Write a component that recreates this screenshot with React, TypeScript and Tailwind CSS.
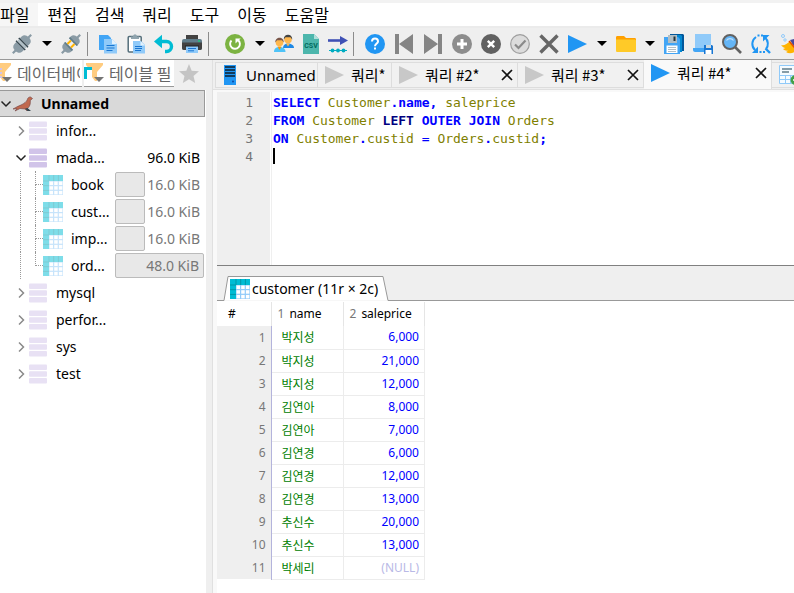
import type { ReactNode } from 'react';

const uiFont = "font-['Noto_Sans','Noto_Sans_CJK_KR',sans-serif]";
const koFont = "font-['Noto_Sans_CJK_KR',sans-serif]";

function Icon({ children, className = 'size-5' }: { children: ReactNode; className?: string }) {
  return (
    <svg viewBox="0 0 20 20" className={`${className} block shrink-0`} aria-hidden="true">
      {children}
    </svg>
  );
}

const Plug = ({ split = false }: { split?: boolean }) => (
  <Icon>
    <g transform="rotate(45 10 10)">
      <path d="M8.900 -3h2.200v6H8.900z M8.900 17h2.200v6H8.900z" fill="#8a9ba5" />
      <path d="M4.500 7.500V5c0-3 2-4.500 5.500-4.500S15.500 2 15.500 5v2.500z" fill="#8a9ba5" />
      <path d="M4.500 12.500V15c0 3 2 4.500 5.500 4.500s5.500-1.500 5.500-4.500v-2.500z" fill="#8a9ba5" />
      {split ? (
        <>
          <path d="M4.500 6.500h11M4.500 13.500h11" stroke="#607d8b" strokeWidth="1.500" />
          <path d="M6.500 7.500h2v5h-2z M11.500 7.500h2v5h-2z" fill="#ffb300" />
        </>
      ) : (
        <>
          <path d="M3.500 7.300h13v1.500h-13z M3.500 11.200h13v1.500h-13z" fill="#37474f" />
          <path d="M4.500 8.800h11v2.400h-11z" fill="#b0bec5" />
        </>
      )}
    </g>
  </Icon>
);

const Copy = () => (
  <Icon>
    <path d="M1 1h9l3 3v12H1z" fill="#42a5f5" />
    <path d="M6 5h8l5 5v9.500H6z" fill="#90caf9" />
    <path d="M14 5v5h5z" fill="#e3f2fd" />
    <path d="M8.500 11.500h8M8.500 14h8M8.500 16.500h6" stroke="#1976d2" />
  </Icon>
);

const Paste = () => (
  <Icon>
    <rect x="2.200" y="2.500" width="13" height="15.500" rx="1" fill="#fff" stroke="#546e7a" strokeWidth="1.500" />
    <path d="M5 5V2.500h2c.5-3 3.500-3 4 0h2V5z" fill="#90a4ae" />
    <path d="M7 7h8l4 4v8.500H7z" fill="#90caf9" />
    <path d="M14.500 7v4.500H19z" fill="#e3f2fd" />
    <path d="M9 12.500h7M9 14.500h7M9 16.500h6" stroke="#1976d2" />
  </Icon>
);

const Undo = () => (
  <Icon>
    <path d="M6 7.500h6.500a5 5 0 0 1 0 10H11" fill="none" stroke="#00bcd4" strokeWidth="3.400" />
    <path d="M0 7.500 8 .8v13.400z" fill="#00bcd4" />
  </Icon>
);

const Print = () => (
  <Icon>
    <path d="M4 1h12v6H4z" fill="#424242" />
    <rect x="0" y="5" width="20" height="11" rx="2" fill="#607d8b" />
    <path d="M0 8.500h20V14a2 2 0 0 1-2 2H2a2 2 0 0 1-2-2z" fill="#424242" />
    <path d="M4 12h12v7H4z" fill="#90caf9" />
    <path d="M3 12h14" stroke="#212121" />
    <path d="M6 14.500h8M6 16.800h6" stroke="#1976d2" />
    <rect x="16" y="6.500" width="2" height="1" fill="#00e676" />
  </Icon>
);

const Refresh = () => (
  <Icon>
    <circle cx="10" cy="10" r="10" fill="#7cb342" />
    <path d="M6.500 6.500a4.900 4.900 0 1 0 6.700-.3" fill="none" stroke="#fff" strokeWidth="1.900" />
    <path d="M10.500 4.500h5.200l-5.200 5z" fill="#fff" />
  </Icon>
);

const Users = () => (
  <Icon>
    <path d="M9 14c0-3 2-4.500 5-4.500s6 1.500 6 4.500z" fill="#1e88e5" />
    <path d="M12 9.500h4l-2 3z" fill="#ffb74d" />
    <circle cx="14" cy="5.500" r="3.800" fill="#ffb74d" />
    <path d="M9.800 5.500c-.5-6.500 9-6.500 8.400 0l-1.700-2.200h-5z" fill="#424242" />
    <path d="M0 18c0-3.500 2-5 5.500-5s6 1.500 6 5z" fill="#4fc3f7" />
    <path d="M3.500 12.500h4l-2 3.500z" fill="#ff9800" />
    <circle cx="5.500" cy="8.500" r="3.800" fill="#ffb74d" />
    <path d="M1.300 8.500C.8 2 10.300 2 9.700 8.500L8 6.300H3z" fill="#795548" />
  </Icon>
);

const Csv = () => (
  <Icon>
    <path d="M2 0h11l5 5v15H2z" fill="#4db6ac" />
    <path d="M13 0v5h5z" fill="#b2dfdb" />
    <text x="10" y="14" textAnchor="middle" fontSize="7" fontWeight="700" fill="#00695c" fontFamily="Roboto, sans-serif">
      CSV
    </text>
  </Icon>
);

const Transfer = () => (
  <Icon>
    <path d="M0 6.500h13" stroke="#3f51b5" strokeWidth="2.600" />
    <path d="M12 2l8 4.500L12 11z" fill="#3f51b5" />
    <path d="M1 16.500h18" stroke="#00acc1" />
    <circle cx="4.500" cy="16.500" r="1.900" fill="#00acc1" />
    <circle cx="10" cy="16.500" r="1.900" fill="#00acc1" />
    <circle cx="15.500" cy="16.500" r="1.900" fill="#00acc1" />
  </Icon>
);

const Help = () => (
  <Icon>
    <circle cx="10" cy="10" r="10" fill="#2196f3" />
    <path d="M7 7.500c0-4 6-4 6 0 0 2-3 2-3 4.800" fill="none" stroke="#fff" strokeWidth="2" />
    <rect x="9" y="13.500" width="2" height="2" fill="#fff" />
  </Icon>
);

const First = () => (
  <Icon>
    <path d="M1 0h4v20H1z M19 0v20L5 10z" fill="#858585" />
  </Icon>
);

const Last = () => (
  <Icon>
    <path d="M15 0h4v20h-4z M1 0v20l14-10z" fill="#858585" />
  </Icon>
);

const Add = () => (
  <Icon>
    <circle cx="10" cy="10" r="10" fill="#8d8d8d" />
    <path d="M10 5v10M5 10h10" stroke="#fff" strokeWidth="3" />
  </Icon>
);

const Remove = () => (
  <Icon>
    <circle cx="10" cy="10" r="10" fill="#616161" />
    <path d="m6.800 6.800 6.400 6.400m0-6.400-6.400 6.400" stroke="#fff" strokeWidth="2.400" />
  </Icon>
);

const Check = () => (
  <Icon>
    <circle cx="10" cy="10" r="9.300" fill="#dcdcdc" stroke="#9e9e9e" strokeWidth="1.200" />
    <path d="m5 10.500 3.500 3.500L15.500 6.500" fill="none" stroke="#8a8a8a" strokeWidth="2.200" />
  </Icon>
);

const Cancel = () => (
  <Icon>
    <path d="m1.500 1.500 17 17m0-17-17 17" stroke="#666" strokeWidth="3.400" />
  </Icon>
);

const Play = ({ color = '#2196f3' }: { color?: string }) => (
  <Icon>
    <path d="M0 1v18l19-9z" fill={color} />
  </Icon>
);

const Folder = () => (
  <Icon>
    <path d="M0 3.500C0 2.500.5 2 1.500 2H8l2 2h8.500c1 0 1.500.5 1.500 1.500V10H0z" fill="#ffa000" />
    <path d="M0 5.500h18.500c1 0 1.500.5 1.500 1.500v9.500c0 1-.5 1.500-1.500 1.500h-17C.5 18 0 17.500 0 16.500z" fill="#ffca28" />
  </Icon>
);

const Save = () => (
  <Icon>
    <path d="M6 0h13l1 1v16H6z" fill="#01579b" />
    <path d="M4 1h13l1 1v16H4z" fill="#0288d1" />
    <path d="M0 3h14l2 2v15H0z" fill="#42a5f5" />
    <path d="M4 1h9v8H4z" fill="#b0bec5" />
    <path d="M9.500 2.500h2v4.500h-2z" fill="#263238" />
    <path d="M2.500 11.500h11V19h-11z" fill="#fff" />
    <path d="M4 13.500h8M4 15.500h8M4 17.500h8" stroke="#b0bec5" />
  </Icon>
);

const SaveScript = () => (
  <Icon>
    <path d="M2 0h16v15H2z" fill="#90caf9" />
    <path d="M0 14h14v4H2c-1 0-2-1-2-2z" fill="#42a5f5" />
    <path d="M11 11h8l1 1v8h-9z" fill="#1976d2" />
    <path d="M13 11h5v3h-5z" fill="#cfd8dc" />
    <path d="M12.500 16h6v4h-6z" fill="#fff" />
  </Icon>
);

const Search = () => (
  <Icon>
    <path d="m13 13 6 6" stroke="#616161" strokeWidth="2.600" />
    <circle cx="8" cy="8" r="7" fill="#64b5f6" stroke="#616161" strokeWidth="2" />
    <path d="M4.500 6.500c1.500-2.500 5.500-2.500 7 0" fill="none" stroke="#bbdefb" strokeWidth="1.200" />
  </Icon>
);

const Replace = () => (
  <Icon>
    <path d="M5 3a8.300 8.300 0 0 0-1 13" fill="none" stroke="#2196f3" strokeWidth="2" />
    <path d="M7 12.500V19H1z" fill="#2196f3" />
    <path d="M14 3.500a8.300 8.300 0 0 1 1 11.500" fill="none" stroke="#2196f3" strokeWidth="2" />
    <path d="M12 1h6.500L12 7.500z" fill="#2196f3" />
    <path d="m14.500 14.500 4.500 4.500" stroke="#2196f3" strokeWidth="2.400" />
    <path d="M6.500 1.500H12M8.500 18H14" stroke="#2196f3" strokeWidth="2" strokeDasharray="2 1.500" />
  </Icon>
);

const Broom = () => (
  <Icon>
    <circle cx="3" cy="2" r="1.500" fill="none" stroke="#90caf9" />
    <circle cx="5" cy="6" r="1.200" fill="none" stroke="#90caf9" />
    <path d="M10 6l4-1 6 8-4 4z" fill="#4a4a9e" />
    <path d="M1 11c3 1 6-1 9-4l7 9c-4 4-8 4-11 2l2.500-1.500c-2 .5-4 0-5.500-1.500l2.500-1C3.500 14 2 12.500 1 11z" fill="#ffb300" />
    <path d="m9 7 7.500 9" stroke="#e65100" strokeWidth="1.500" />
  </Icon>
);

const TableIcon = ({ faded = false }: { faded?: boolean }) => (
  <svg viewBox="0 0 20 20" className={`block size-5 shrink-0 ${faded ? 'opacity-50' : ''}`} aria-hidden="true">
    <path d="M0 0h20v20H0z" fill="#00bcd4" />
    <path d="M6 6h14v14H6z" fill="#90caf9" />
    {[6, 10.7, 15.4].map((y) =>
      [6, 10.7, 15.4].map((x) => <rect key={`${x}-${y}`} x={x + 0.5} y={y + 0.5} width="3.500" height="3.500" fill="#fff" />),
    )}
    <path d="M6 0v6M10.700 0v6M15.400 0v6M0 6h6M0 10.700h6M0 15.400h6" stroke="#0097a7" />
  </svg>
);

const Database = ({ open = false }: { open?: boolean }) => (
  <svg viewBox="0 0 18 20" className="block h-5 w-[18px] shrink-0" aria-hidden="true">
    <g fill={open ? '#d1c4e9' : '#e8e1f4'}>
      <rect y="0.500" width="18" height="5.500" rx="1" />
      <rect y="7.200" width="18" height="5.500" rx="1" />
      <rect y="14" width="18" height="5.500" rx="1" />
    </g>
  </svg>
);

const SeaLion = () => (
  <svg viewBox="0 0 20 16" className="block h-4 w-5 shrink-0" aria-hidden="true">
    <path d="M19.500 2.500 17.500 1c-1.500-.2-2.700.8-3 2.200C13.500 6 11 7.500 8 9c-3 1-5 2.500-8 4l4-.3L2 15l5-2.500 5 .5 1.500 1.500h3L14.500 12.500c2.800-2.500 3-5 2.800-8z" fill="#c1694f" stroke="#6d4040" strokeWidth=".6" />
    <path d="M12 12.500l2.500 2.500h3.500l-3.500-3z" fill="#37474f" />
  </svg>
);

const Funnel = ({ table = false }: { table?: boolean }) => (
  <svg viewBox="0 0 20 20" className="block size-5 shrink-0" aria-hidden="true">
    <path d="M2 0h17v2l-6 7v9h-2l-3-4V9L2 2z" fill="#ffcc80" />
    {table ? (
      <>
        <path d="M0 4h8v3H3v9H0z" fill="#00bcd4" />
        <path d="M3 7h5v4H5v4H3z" fill="#fff" />
      </>
    ) : (
      <path d="M3 5h7v2H3z M3 9h7v2H3z M3 13h7v2H3z" fill="#d1c4e9" />
    )}
    <path d="M10 14h10l-5 5z" fill="#757575" />
  </svg>
);

const Server = () => (
  <svg viewBox="0 0 12 20" className="mx-1 block h-5 w-3 shrink-0" aria-hidden="true">
    <path d="M0 0h12v20H0z" fill="#2196f3" />
    <path d="M1 2h10M1 5h10M1 8h10M1 11h10" stroke="#123c5e" strokeWidth="1.800" />
    <circle cx="9" cy="16.500" r="1" fill="#0d47a1" />
  </svg>
);

const NewTab = () => (
  <Icon>
    <path d="M.5.5h19v18H.5z" fill="#f5fbff" stroke="#90caf9" />
    <path d="M3 4h10M3 7h7" stroke="#607d8b" strokeWidth="1.300" />
    <path d="M1 10.500h18M1 14.500h18M6.500 10v8M11.500 10v8" stroke="#90caf9" />
    <circle cx="16.500" cy="15" r="5" fill="#43a047" />
    <path d="M16.500 12.500v5M14 15h5" stroke="#fff" strokeWidth="1.500" />
  </Icon>
);

const Close = () => (
  <svg viewBox="0 0 12 12" className="block size-3" aria-hidden="true">
    <path d="m1 1 10 10m0-10L1 11" stroke="#111" strokeWidth="1.700" />
  </svg>
);

function Tool({ label, width = 'w-7', children }: { label: string; width?: string; children: ReactNode }) {
  return (
    <button type="button" aria-label={label} className={`flex h-7 shrink-0 items-center justify-center ${width}`}>
      {children}
    </button>
  );
}

function Caret({ label, width = 'w-[21px]' }: { label: string; width?: string }) {
  return (
    <Tool label={label} width={width}>
      <svg viewBox="0 0 10 5" className="block h-[5px] w-[10px]" aria-hidden="true">
        <path d="M0 0h10L5 5z" fill="#000" />
      </svg>
    </Tool>
  );
}

const Separator = () => <span className="mr-1.5 ml-0.5 h-6 w-px shrink-0 bg-[#8c8c8c]" />;

function Toolbar() {
  const wide = 'w-[29px]';
  const medium = 'w-[27px]';
  return (
    <div role="toolbar" aria-label="도구 모음" className="flex h-8 items-center overflow-hidden border-b border-[#999] bg-[#efefef] pl-2">
      <Tool label="연결"><Plug /></Tool>
      <Caret label="연결 목록" />
      <Tool label="연결 끊기"><Plug split /></Tool>
      <Separator />
      <Tool label="복사"><Copy /></Tool>
      <Tool label="붙여넣기"><Paste /></Tool>
      <Tool label="실행 취소"><Undo /></Tool>
      <Tool label="인쇄"><Print /></Tool>
      <Separator />
      <div className="ml-1.5 flex shrink-0">
        <Tool label="새로 고침"><Refresh /></Tool>
        <Caret label="새로 고침 옵션" />
        <Tool label="사용자 관리" width={medium}><Users /></Tool>
        <Tool label="CSV 가져오기" width={medium}><Csv /></Tool>
        <Tool label="내보내기" width={medium}><Transfer /></Tool>
      </div>
      <Separator />
      <Tool label="도움말" width={wide}><Help /></Tool>
      <Tool label="처음" width={wide}><First /></Tool>
      <Tool label="마지막" width={wide}><Last /></Tool>
      <Tool label="행 추가" width={wide}><Add /></Tool>
      <Tool label="행 삭제" width={wide}><Remove /></Tool>
      <Tool label="적용" width={wide}><Check /></Tool>
      <Tool label="취소" width={wide}><Cancel /></Tool>
      <Tool label="실행" width={wide}><Play /></Tool>
      <Caret label="실행 옵션" width="w-[19px]" />
      <Tool label="열기" width={wide}><Folder /></Tool>
      <Caret label="최근 파일" width="w-[19px]" />
      <Tool label="저장" width={wide}><Save /></Tool>
      <Tool label="스니펫 저장" width={wide}><SaveScript /></Tool>
      <Tool label="찾기" width={wide}><Search /></Tool>
      <Tool label="바꾸기" width={wide}><Replace /></Tool>
      <Tool label="정리" width={wide}><Broom /></Tool>
    </div>
  );
}

function Chevron({ open = false }: { open?: boolean }) {
  return (
    <svg viewBox="0 0 12 12" className="block size-3 shrink-0" aria-hidden="true">
      {open ? (
        <path d="m1.500 3.500 4.500 4.500 4.500-4.500" fill="none" stroke="#222" strokeWidth="1.500" />
      ) : (
        <path d="m4 1.500 4.500 4.500L4 10.500" fill="none" stroke="#8a8a8a" strokeWidth="1.500" />
      )}
    </svg>
  );
}

function DatabaseRow({ name, size, open = false }: { name: string; size?: string; open?: boolean }) {
  return (
    <div className="flex h-[27px] items-center pr-1.5 pl-[15px]">
      <Chevron open={open} />
      <span className="mr-[9px] ml-0.5"><Database open={open} /></span>
      <span className="grow">{name}</span>
      {size && <span>{size}</span>}
    </div>
  );
}

function TableRow({ name, size, full = false, last = false }: { name: string; size: string; full?: boolean; last?: boolean }) {
  return (
    <li className="flex h-[27px] items-center pr-0.5 pl-5">
      <span className="h-full w-[15px] border-l border-dotted border-[#999]" />
      <span className={`flex w-2 flex-col ${last ? 'self-start' : 'h-full'}`}>
        <span className="h-[14px] w-full border-b border-l border-dotted border-[#999]" />
        {!last && <span className="grow border-l border-dotted border-[#999]" />}
      </span>
      <TableIcon faded />
      <span className="ml-2 grow">{name}</span>
      <span
        className={`flex h-[25px] w-[89px] items-center justify-end rounded-[2px] pr-1 text-[#777] ${
          full ? 'border border-[#bbb] bg-[#e8e8e8]' : ''
        }`}
      >
        {!full && <span className="h-full grow rounded-[2px] border border-[#bbb] bg-[#e8e8e8]" />}
        <span className="pl-0.5">{size}</span>
      </span>
    </li>
  );
}

function Sidebar() {
  return (
    <aside className="flex w-[206px] shrink-0 flex-col bg-white">
      <div className={`flex h-[30px] bg-[#efefef] text-base ${koFont}`}>
        <label className="mr-0.5 flex h-[27px] w-[82px] shrink-0 items-center overflow-hidden border-b border-[#999] bg-white pr-0.5">
          <span className="-ml-2"><Funnel /></span>
          <input aria-label="데이터베이스 필터" placeholder="데이터베이스 필터" className="ml-[5px] w-full min-w-0 outline-none placeholder:text-[#666]" />
        </label>
        <label className="flex h-[27px] w-[90px] shrink-0 items-center overflow-hidden border-b border-[#999] bg-white pr-0.5">
          <Funnel table />
          <input aria-label="테이블 필터" placeholder="테이블 필터" className="ml-[5px] w-full min-w-0 outline-none placeholder:text-[#666]" />
        </label>
        <button type="button" aria-label="즐겨찾기" className="flex h-7 w-[30px] items-center justify-center">
          <Icon><path d="m10 0 2.700 6.700 7.300.6-5.500 4.800L16.200 19 10 15.300 3.800 19l1.700-6.900L0 7.300l7.300-.6z" fill="#c4c4c4" /></Icon>
        </button>
      </div>
      <nav aria-label="데이터베이스 개체" className="text-sm">
        <div className="mr-px flex h-[27px] items-center border border-l-0 border-[#999] bg-[#d9d9d9] font-bold">
          <Chevron open />
          <span className="mr-2 ml-px"><SeaLion /></span>
          Unnamed
        </div>
        <DatabaseRow name="infor..." />
        <DatabaseRow name="mada..." size="96.0 KiB" open />
        <ul>
          <TableRow name="book" size="16.0 KiB" />
          <TableRow name="cust..." size="16.0 KiB" />
          <TableRow name="imp..." size="16.0 KiB" />
          <TableRow name="ord..." size="48.0 KiB" full last />
        </ul>
        <DatabaseRow name="mysql" />
        <DatabaseRow name="perfor..." />
        <DatabaseRow name="sys" />
        <DatabaseRow name="test" />
      </nav>
    </aside>
  );
}

function QueryTab({ label, width, active = false, closable = true }: { label: string; width: string; active?: boolean; closable?: boolean }) {
  return (
    <div
      className={`flex shrink-0 items-center border-r border-[#ddd] pr-1 pl-[7px] ${width} ${
        active ? 'h-[29px] self-start bg-[#f9f9f9] pb-1' : 'h-[26px] border-y bg-[#f1f1f1]'
      }`}
    >
      <button type="button" role="tab" aria-selected={active} className={`flex items-center gap-1.5 whitespace-pre ${koFont}`}>
        <Play color={active ? '#2196f3' : '#c8c8c8'} />
        {label}
      </button>
      {closable && (
        <button type="button" aria-label={`${label} 닫기`} className="ml-auto">
          <Close />
        </button>
      )}
    </div>
  );
}

function Tabs() {
  return (
    <div role="tablist" className="flex h-[29px] items-center overflow-hidden bg-[#efefef] pl-0.5 text-[15px] leading-5">
      <button type="button" role="tab" aria-selected="false" className="flex h-[26px] w-[103px] shrink-0 items-center gap-1.5 border border-[#ddd] bg-[#f1f1f1] pl-1">
        <Server />
        Unnamed
      </button>
      <QueryTab label="쿼리*" width="w-[74px]" closable={false} />
      <QueryTab label="쿼리 #2*" width="w-[126px]" />
      <QueryTab label="쿼리 #3*" width="w-[126px]" />
      <QueryTab label="쿼리 #4*" width="w-[128px]" active />
      <button type="button" aria-label="새 쿼리 탭" className="flex h-[26px] w-8 shrink-0 items-center border-y border-[#ddd] bg-[#f1f1f1] pl-[7px]">
        <NewTab />
      </button>
    </div>
  );
}

const Key = ({ children }: { children: ReactNode }) => <b className="text-[#0000ff]">{children}</b>;

function Editor() {
  return (
    <div className="flex h-[174px] border-b border-[#808080] bg-white font-['DejaVu_Sans_Mono','Liberation_Mono',monospace] text-[13px] leading-[18px]">
      <ol className="w-[54px] border-r border-white bg-[#efefef] pt-0.5 pr-[17px] text-right text-[#777]">
        <li>1</li>
        <li>2</li>
        <li>3</li>
        <li>4</li>
      </ol>
      <pre
        role="textbox"
        aria-multiline="true"
        aria-label="SQL 편집기"
        className="grow border-l border-[#efefef] pt-0.5 pl-px font-[inherit] text-[#808000]"
      >
        <div><Key>SELECT</Key> Customer<Key>.name,</Key> saleprice</div>
        <div><Key>FROM</Key> Customer <b className="text-[#000080]">LEFT</b> <Key>OUTER</Key> <Key>JOIN</Key> Orders</div>
        <div><Key>ON</Key> Customer<Key>.</Key>custid <span className="text-[#0000ff]">=</span> Orders<Key>.</Key>custid<Key>;</Key></div>
        <div className="h-4 w-0.5 bg-black" />
      </pre>
    </div>
  );
}

const rows: [string, string | null][] = [
  ['박지성', '6,000'],
  ['박지성', '21,000'],
  ['박지성', '12,000'],
  ['김연아', '8,000'],
  ['김연아', '7,000'],
  ['김연경', '6,000'],
  ['김연경', '12,000'],
  ['김연경', '13,000'],
  ['추신수', '20,000'],
  ['추신수', '13,000'],
  ['박세리', null],
];

function Results() {
  return (
    <section className="flex grow flex-col bg-white">
      <div className="flex h-[35px] items-end bg-[#efefef]">
        <span className="h-px w-1.5 bg-[#999]" />
        <button type="button" role="tab" aria-selected="true" className="relative isolate flex h-[25px] w-[166px] items-center gap-0.5 pl-[7px] text-sm whitespace-nowrap">
          <svg viewBox="0 0 166 25" preserveAspectRatio="none" className="absolute inset-0 -z-10 size-full" aria-hidden="true">
            <path d="M0 24.500h1L5 .5h155l5 24h1" fill="#fff" stroke="#999" />
          </svg>
          <TableIcon />
          customer (11r × 2c)
        </button>
        <span className="h-px grow bg-[#999]" />
      </div>
      <table className="mt-px w-[208px] table-fixed border-collapse text-xs leading-4">
        <thead>
          <tr className="h-6 text-left">
            <th scope="col" className="w-[54px] border-r border-[#e5e5e5] pl-[11px] font-normal">#</th>
            <th scope="col" className="w-[72px] border-r border-[#e5e5e5] pl-1.5 font-normal"><span className="mr-[5px] text-[#777]">1</span>name</th>
            <th scope="col" className="border-r border-[#e5e5e5] pl-1.5 font-normal"><span className="mr-[5px] text-[#777]">2</span>saleprice</th>
          </tr>
        </thead>
        <tbody>
          {rows.map(([name, price], i) => (
            <tr key={i} className="h-[23px]">
              <th scope="row" className="border-r border-[#b4b4dc] bg-[#efefef] pr-[5px] text-right font-normal text-[#777]">{i + 1}</th>
              <td className={`border-r border-b border-[#ececec] pl-2.5 text-[#008000] ${koFont}`}>{name}</td>
              <td className={`border-r border-b border-[#ececec] pr-[5px] text-right ${price ? 'text-[#0000ff]' : 'text-[#b9b9e6]'}`}>{price ?? '(NULL)'}</td>
            </tr>
          ))}
        </tbody>
      </table>
    </section>
  );
}

const menus = ['파일', '편집', '검색', '쿼리', '도구', '이동', '도움말'];

export default function App() {
  return (
    <div className={`flex min-h-screen flex-col overflow-hidden bg-white text-black ${uiFont}`}>
      <header>
        <div className="h-[3px] bg-[#f2f2f2]" />
        <nav aria-label="메뉴" className={`flex h-[25px] border-b-2 border-[#ebebeb] bg-white text-base leading-5 ${koFont}`}>
          <div className="-ml-[9px] flex">
            {menus.map((menu, i) => (
              <button key={menu} type="button" className={`px-[9px] pb-0.5 ${i === 0 ? 'bg-[#f6f6f6]' : ''}`}>
                {menu}
              </button>
            ))}
          </div>
        </nav>
        <Toolbar />
      </header>
      <div className="flex grow">
        <Sidebar />
        <div className="w-[7px] shrink-0 border-r border-[#e0e0e0] bg-[#efefef]" />
        <main className="flex min-w-0 grow flex-col">
          <Tabs />
          <div className="flex grow flex-col border-t border-[#e0e0e0] bg-[#f9f9f9] pt-0.5 pl-1">
            <Editor />
            <Results />
          </div>
        </main>
      </div>
    </div>
  );
}
